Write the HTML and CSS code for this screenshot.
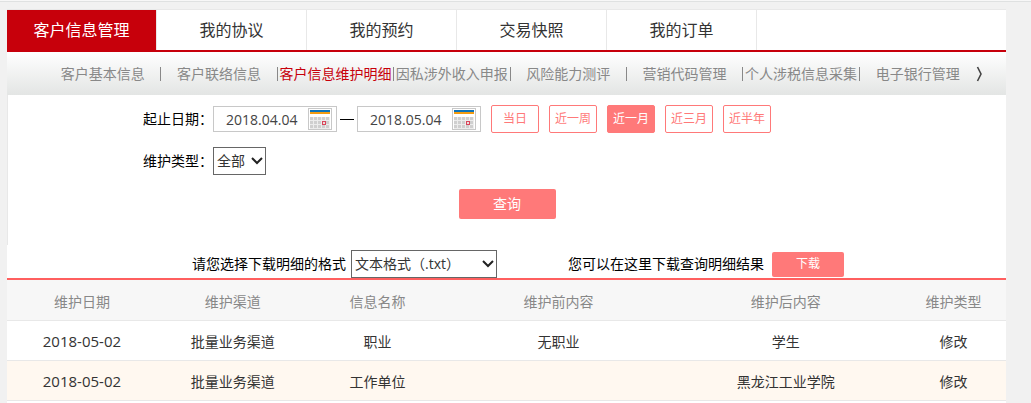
FILE: index.html
```html
<!DOCTYPE html>
<html lang="zh-CN">
<head>
    <meta charset="UTF-8">
    <meta name="viewport" content="width=device-width, initial-scale=1.0">
    <title>客户信息管理</title>
    <link rel="stylesheet" href="styles.css">
</head>
<body>
    <div class="topline"></div>
    <div class="wrapper">
        <nav class="tabs">
            <a href="#" class="active">客户信息管理</a>
            <a href="#">我的协议</a>
            <a href="#">我的预约</a>
            <a href="#">交易快照</a>
            <a href="#">我的订单</a>
        </nav>

        <nav class="subnav">
            <div class="sublist">
                <a href="#">客户基本信息</a>
                <a href="#">客户联络信息</a>
                <a href="#" class="active">客户信息维护明细</a>
                <a href="#">因私涉外收入申报</a>
                <a href="#">风险能力测评</a>
                <a href="#">营销代码管理</a>
                <a href="#">个人涉税信息采集</a>
                <a href="#">电子银行管理</a>
            </div>
            <button type="button" class="next" aria-label="更多">
                <svg width="8" height="16" viewBox="0 0 8 16"><path d="M1.5 1 L5 8 L1.5 15" fill="none" stroke="#444" stroke-width="1.6"/></svg>
            </button>
        </nav>

        <form class="query">
            <div class="row">
                <label for="startDate" class="title">起止日期：</label>
                <div class="date">
                    <input type="text" id="startDate" value="2018.04.04">
                    <button type="button" aria-label="选择开始日期">
                        <svg width="24" height="22" viewBox="0 0 24 22" shape-rendering="crispEdges">
                            <rect x="0.5" y="0.5" width="23" height="21" fill="#fff" stroke="#c8c8c8"/>
                            <rect x="2" y="2" width="20" height="2" fill="#0b72b9"/>
                            <rect x="2" y="4" width="20" height="2" fill="#f39c12"/>
                            <rect x="2" y="9" width="20" height="12" fill="#ececec"/>
                            <path d="M2 10.5H22M2 14.5H22M2 18.5H22" stroke="#cfcfcf" stroke-width="3" stroke-dasharray="3 1"/>
                            <rect x="14.5" y="13.5" width="3" height="3" fill="#e8dcdc" stroke="#d9455a"/>
                        </svg>
                    </button>
                </div>
                <span class="dash"></span>
                <div class="date">
                    <input type="text" id="endDate" value="2018.05.04" aria-label="结束日期">
                    <button type="button" aria-label="选择结束日期">
                        <svg width="24" height="22" viewBox="0 0 24 22" shape-rendering="crispEdges">
                            <rect x="0.5" y="0.5" width="23" height="21" fill="#fff" stroke="#c8c8c8"/>
                            <rect x="2" y="2" width="20" height="2" fill="#0b72b9"/>
                            <rect x="2" y="4" width="20" height="2" fill="#f39c12"/>
                            <rect x="2" y="9" width="20" height="12" fill="#ececec"/>
                            <path d="M2 10.5H22M2 14.5H22M2 18.5H22" stroke="#cfcfcf" stroke-width="3" stroke-dasharray="3 1"/>
                            <rect x="14.5" y="13.5" width="3" height="3" fill="#e8dcdc" stroke="#d9455a"/>
                        </svg>
                    </button>
                </div>
                <div class="ranges">
                    <button type="button">当日</button>
                    <button type="button">近一周</button>
                    <button type="button" class="active">近一月</button>
                    <button type="button">近三月</button>
                    <button type="button">近半年</button>
                </div>
            </div>
            <div class="row">
                <label for="type" class="title">维护类型：</label>
                <div class="select">
                    <select id="type">
                        <option>全部</option>
                    </select>
                    <svg width="12" height="8" viewBox="0 0 12 8"><path d="M1 1 L6 6 L11 1" fill="none" stroke="#222" stroke-width="2"/></svg>
                </div>
            </div>
            <button type="button" class="btn search">查询</button>
        </form>

        <div class="download">
            <label for="format">请您选择下载明细的格式</label>
            <div class="select wide">
                <select id="format">
                    <option>文本格式（.txt）</option>
                </select>
                <svg width="12" height="8" viewBox="0 0 12 8"><path d="M1 1 L6 6 L11 1" fill="none" stroke="#222" stroke-width="2"/></svg>
            </div>
            <span class="tip">您可以在这里下载查询明细结果</span>
            <button type="button" class="btn save">下载</button>
        </div>

        <table class="list">
            <colgroup>
                <col class="c-date">
                <col class="c-channel">
                <col class="c-name">
                <col class="c-before">
                <col class="c-after">
                <col class="c-type">
            </colgroup>
            <thead>
                <tr>
                    <th>维护日期</th>
                    <th>维护渠道</th>
                    <th>信息名称</th>
                    <th>维护前内容</th>
                    <th>维护后内容</th>
                    <th>维护类型</th>
                </tr>
            </thead>
            <tbody>
                <tr>
                    <td class="day">2018-05-02</td>
                    <td>批量业务渠道</td>
                    <td>职业</td>
                    <td>无职业</td>
                    <td>学生</td>
                    <td>修改</td>
                </tr>
                <tr>
                    <td class="day">2018-05-02</td>
                    <td>批量业务渠道</td>
                    <td>工作单位</td>
                    <td></td>
                    <td>黑龙江工业学院</td>
                    <td>修改</td>
                </tr>
            </tbody>
        </table>
    </div>
</body>
</html>
```
FILE: styles.css
```css
* {
    box-sizing: border-box;
}
body {
    display: flex;
    flex-direction: column;
    min-height: 100vh;
    margin: 0;
    background-color: #f1f1f1;
    font-family: "Open Sans", "Noto Sans CJK SC", sans-serif;
    font-size: 14px;
    line-height: 20px;
    color: #000;
}
button, input, select {
    margin: 0;
    font-family: inherit;
    font-size: 14px;
    line-height: 20px;
}
button {
    padding: 0;
    cursor: pointer;
}
a {
    text-decoration: none;
}
svg {
    display: block;
}
.topline {
    height: 2px;
    background-color: #f7f7f7;
    border-bottom: 1px solid #dfe1e1;
}
.wrapper {
    flex: 1;
    margin: 7px 25px 0 7px;
    background-color: #fff;
    border-top: 1px solid #e8e8e8;
}

/* main tabs */
.tabs {
    display: flex;
    border-bottom: 2px solid #c7000b;
}
.tabs a {
    width: 150px;
    border-right: 1px solid #e8e8e8;
    font-size: 16px;
    line-height: 40px;
    text-align: center;
    color: #333;
}
.tabs a.active {
    background-color: #c7000b;
    color: #fff;
}

/* second level */
.subnav {
    display: flex;
    align-items: center;
    height: 43px;
    padding: 0 22px 0 38px;
    background: linear-gradient(#fff, #e3e5e4);
}
.sublist {
    display: flex;
    flex: 1;
}
.sublist a {
    display: flex;
    flex: 1 1 0;
    align-items: center;
    justify-content: center;
    white-space: nowrap;
    color: #888;
}
.sublist a:not(:last-child)::after {
    content: "";
    width: 1px;
    height: 14px;
    margin-left: auto;
    background-color: #888;
}
.sublist a:not(:last-child)::before {
    content: "";
    margin-right: auto;
}
.sublist a.active {
    color: #c7000b;
}
.next {
    background: none;
    border: 0;
}

/* query form */
.query {
    display: flex;
    flex-direction: column;
    height: 150px;
    padding-top: 10px;
    border-left: 1px solid #e8e8e8;
}
.row {
    display: flex;
    align-items: center;
    height: 28px;
    margin-bottom: 14px;
    padding-left: 135px;
}
.title {
    width: 70px;
    white-space: nowrap;
}
.date {
    display: flex;
    align-items: center;
    width: 124px;
    height: 26px;
    padding-right: 4px;
    border: 1px solid #c8c8c8;
}
.date input {
    flex: 1;
    min-width: 0;
    height: 24px;
    padding: 0 0 0 12px;
    border: 0;
    background: none;
    color: #444;
}
.date button {
    border: 0;
    background: none;
}
.dash {
    width: 14px;
    height: 1px;
    margin: 0 3px;
    background-color: #000;
}
.ranges {
    display: flex;
    gap: 10px;
    margin-left: 10px;
}
.ranges button {
    width: 48px;
    height: 28px;
    border: 1px solid #ff7979;
    border-radius: 2px;
    background-color: #fff;
    font-size: 12px;
    color: #ff7979;
}
.ranges button.active {
    background-color: #ff7979;
    color: #fff;
}
.select {
    display: grid;
    align-items: center;
    width: 53px;
}
.select.wide {
    width: 146px;
}
.select select, .select svg {
    grid-area: 1 / 1;
}
.select select {
    width: 100%;
    height: 28px;
    padding: 0 3px;
    border: 1px solid #666;
    border-radius: 0;
    background-color: #fff;
    color: #333;
    appearance: none;
}
.select svg {
    justify-self: end;
    margin-right: 3px;
    pointer-events: none;
}
.btn {
    border: 0;
    border-radius: 2px;
    background-color: #ff7979;
    color: #fff;
}
.search {
    align-self: center;
    width: 97px;
    height: 30px;
}

/* download bar */
.download {
    display: flex;
    align-items: center;
    gap: 5px;
    padding: 5px 0 0 185px;
}
.tip {
    margin-left: 66px;
}
.save {
    width: 72px;
    height: 25px;
    margin-left: 3px;
    font-size: 12px;
}

/* result list */
.list {
    width: 100%;
    border-top: 2px solid #ff5f5f;
    border-spacing: 0;
    table-layout: fixed;
    text-align: center;
}
.list th, .list td {
    height: 40px;
    padding: 2px 0 0;
    border-bottom: 1px solid #e8e8e8;
    color: #333;
}
.list th {
    height: 41px;
    padding-top: 4px;
    background-color: #f7f7f7;
    font-weight: normal;
    color: #888;
}
.list tbody tr:nth-child(even) {
    background-color: #fff8f0;
}
.list .day {
    padding-top: 0;
    font-size: 15px;
}
.c-date {
    width: 15%;
}
.c-channel {
    width: 15.2%;
}
.c-name {
    width: 13.8%;
}
.c-before {
    width: 22.4%;
}
.c-after {
    width: 23.1%;
}
.c-type {
    width: 10.5%;
}
```
